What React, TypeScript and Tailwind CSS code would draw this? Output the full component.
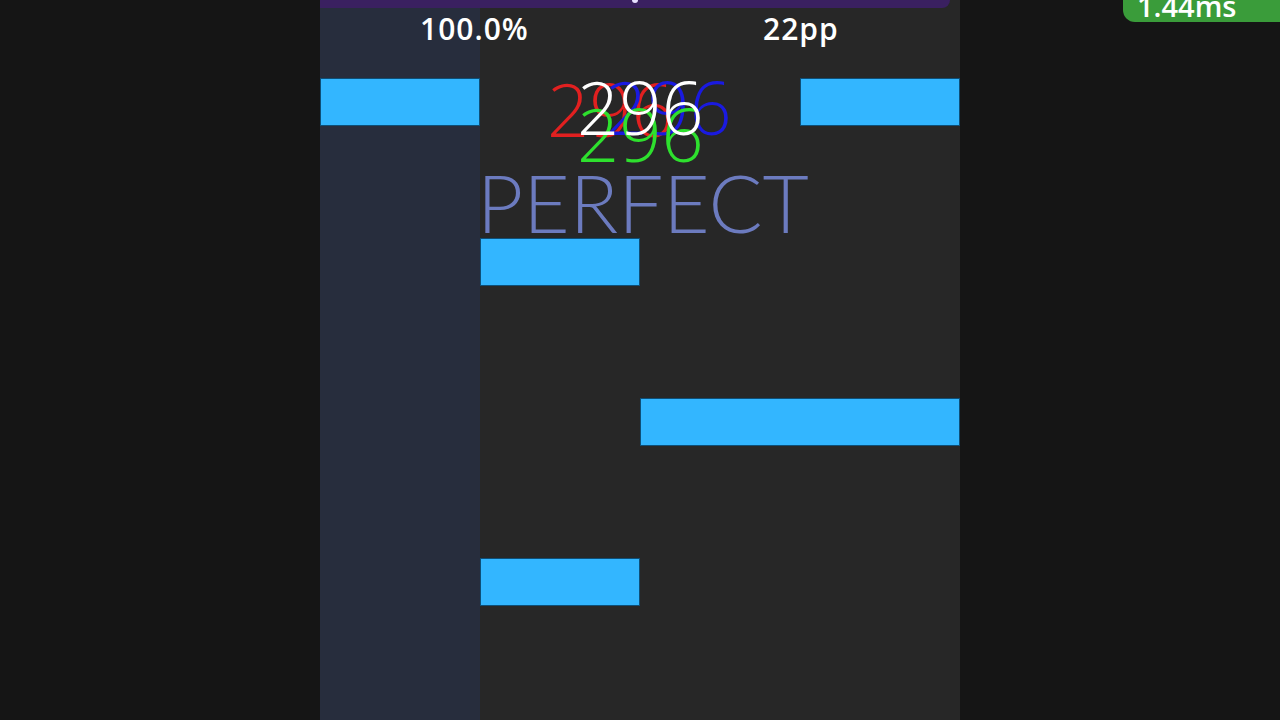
import React from 'react';

type Note = { left: number; top: number; width: number };

const notes: Note[] = [
  { left: 0, top: 78, width: 160 },
  { left: 480, top: 78, width: 160 },
  { left: 160, top: 238, width: 160 },
  { left: 320, top: 398, width: 320 },
  { left: 160, top: 558, width: 160 },
];

const thinFont = { fontFamily: 'Lato, "Liberation Sans", sans-serif' };
const comboFont = { fontFamily: '"Open Sans", Lato, sans-serif' };
const hudFont = { fontFamily: '"Open Sans", Lato, sans-serif' };

export default function App() {
  return (
    <div className="relative flex h-[720px] w-[1280px] justify-center overflow-hidden bg-[#151515]">
      {/* playfield */}
      <div className="relative h-full w-[640px] bg-[#272727]">
        <div className="grid h-full grid-cols-4">
          <div className="bg-[#272d3d]" />
          <div />
          <div />
          <div />
        </div>

        {notes.map((n, i) => (
          <div
            key={i}
            className="absolute h-[48px] border border-[#0d4f78] bg-[#33b6ff]"
            style={{ left: n.left, top: n.top, width: n.width }}
          />
        ))}

        {/* top hud */}
        <div className="absolute inset-x-0 top-0 flex flex-col">
          <div className="flex h-[8px] w-[630px] justify-center rounded-br-[8px] bg-[#3a2060]">
            <div className="h-[3px] w-[6px] rounded-b-full bg-[#e8e0ff]" />
          </div>
          <div
            className="grid grid-cols-2 pt-[4px] text-[30px] font-semibold leading-[34px] tracking-[1px] text-white"
            style={hudFont}
          >
            <div className="pl-[100px]">100.0%</div>
            <div className="pl-[123px]">22pp</div>
          </div>
        </div>

        {/* combo */}
        <div className="absolute left-[257px] top-[65px] text-[74px] font-light leading-[84px]" style={comboFont}>
          <span className="absolute left-[-30px] top-[2px] text-[#e12020]">296</span>
          <span className="absolute left-[28px] top-0 text-[#1a1ae0]">296</span>
          <span className="absolute left-0 top-[27px] text-[#2ee02e]">296</span>
          <span className="relative text-white">296</span>
        </div>

        {/* judgement */}
        <div className="absolute left-[157px] top-[158px] text-[80px] font-light leading-[88px] text-[#6c7bbf]" style={thinFont}>
          PERFECT
        </div>
      </div>

      {/* latency badge */}
      <div
        className="absolute right-0 top-[-12px] flex h-[34px] w-[157px] items-end rounded-bl-[12px] bg-[#3a9c3a] pl-[14px] text-[29px] font-semibold leading-[32px] text-white"
        style={hudFont}
      >
        1.44ms
      </div>
    </div>
  );
}
